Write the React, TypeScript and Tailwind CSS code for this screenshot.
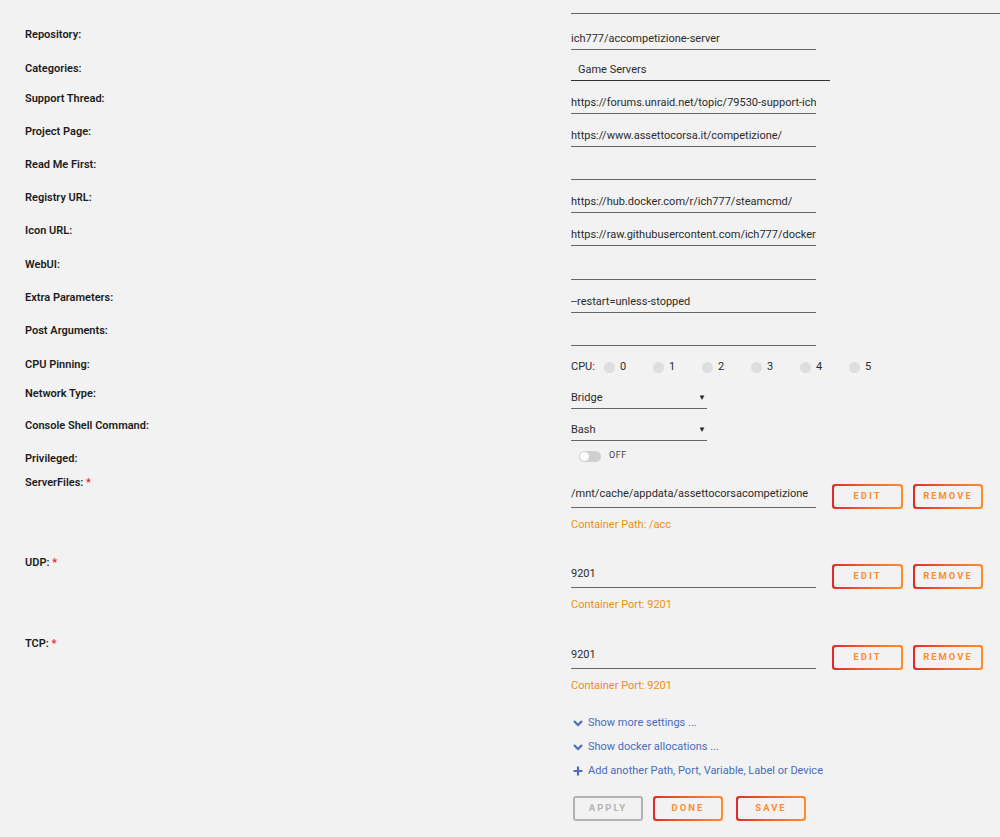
import React from "react";

const F = { fontFamily: 'Roboto, "Open Sans", sans-serif' };

function Label({ text, req }: { text: string; req?: boolean }) {
  return (
    <div className="w-[546px] shrink-0 pt-[1px] text-[11px] leading-[18px] font-semibold text-[#1c1c1c]">
      {text}
      {req && <span className="text-[#e22828]"> *</span>}
    </div>
  );
}

function TextInput({ value, w = "w-[245px]" }: { value?: string; w?: string }) {
  return (
    <div className={`${w} mt-[4px] h-[21px] pt-[1px] border-b border-[#666] text-[11px] leading-[18px] text-[#2b2b2b] overflow-hidden whitespace-nowrap`}>
      {value ?? ""}
    </div>
  );
}

function Row({ h, label, req, children }: { h: string; label: string; req?: boolean; children?: React.ReactNode }) {
  return (
    <div className={`flex ${h}`}>
      <Label text={label} req={req} />
      <div className="flex flex-col">{children}</div>
    </div>
  );
}

function GradBtn({ text, w = "w-[71px]" }: { text: string; w?: string }) {
  return (
    <div className={`${w} h-[25px] rounded-[3px] p-[2px] bg-linear-to-r from-[#e22828] to-[#ff8c2f]`}>
      <div className="w-full h-full rounded-[2px] bg-[#f2f2f2] flex items-center justify-center text-[9.5px] font-bold tracking-[2px] text-[#ff8c2f]">
        {text}
      </div>
    </div>
  );
}

function Chevron() {
  return (
    <svg width="10" height="8" viewBox="0 0 10 8" className="mr-[5px]">
      <path d="M1 2 L5 6 L9 2" fill="none" stroke="#486dba" strokeWidth="2.2" />
    </svg>
  );
}

function Plus() {
  return (
    <svg width="10" height="10" viewBox="0 0 10 10" className="mr-[5px]">
      <path d="M5 0.5 V9.5 M0.5 5 H9.5" fill="none" stroke="#486dba" strokeWidth="2.2" />
    </svg>
  );
}

function PathRow({ h, label, value, note }: { h: string; label: string; value: string; note: string }) {
  return (
    <div className={`flex ${h}`}>
      <Label text={label} req />
      <div className="flex flex-col">
        <div className="flex items-end mt-[11px]">
          <div className="w-[245px] h-[24px] pt-[1px] border-b border-[#666] text-[11px] leading-[18px] text-[#2b2b2b] whitespace-nowrap overflow-hidden">
            {value}
          </div>
          <div className="ml-[16px] flex gap-[10px] mb-[-1px]">
            <GradBtn text="EDIT" />
            <GradBtn text="REMOVE" w="w-[70px]" />
          </div>
        </div>
        <div className="mt-[8px] text-[11px] leading-[18px] text-[#f0900a]">{note}</div>
      </div>
    </div>
  );
}

export default function App() {
  const cpus = [0, 1, 2, 3, 4, 5];
  return (
    <div className="w-[1000px] h-[837px] bg-[#f2f2f2] overflow-hidden" style={F}>
      <div className="flex h-[25px]">
        <div className="w-[571px] shrink-0" />
        <div className="flex-1 h-[14px] border-b border-[#666]" />
      </div>
      <div className="pl-[25px]">
        <Row h="h-[34px]" label="Repository:">
          <TextInput value="ich777/accompetizione-server" />
        </Row>
        <Row h="h-[30px]" label="Categories:">
          <div className="w-[259px] mt-[1px] h-[21px] pt-[1px] border-b border-[#333] text-[11px] leading-[18px] text-[#2b2b2b] pl-[7px]">
            Game Servers
          </div>
        </Row>
        <Row h="h-[33px]" label="Support Thread:">
          <TextInput value="https://forums.unraid.net/topic/79530-support-ich777-gameserver-dockers/" />
        </Row>
        <Row h="h-[33px]" label="Project Page:">
          <TextInput value="https://www.assettocorsa.it/competizione/" />
        </Row>
        <Row h="h-[33px]" label="Read Me First:">
          <TextInput value="" />
        </Row>
        <Row h="h-[33px]" label="Registry URL:">
          <TextInput value="https://hub.docker.com/r/ich777/steamcmd/" />
        </Row>
        <Row h="h-[34px]" label="Icon URL:">
          <TextInput value="https://raw.githubusercontent.com/ich777/docker-templates/master/ich777/images/acc.png" />
        </Row>
        <Row h="h-[33px]" label="WebUI:">
          <TextInput value="" />
        </Row>
        <Row h="h-[33px]" label="Extra Parameters:">
          <TextInput value="--restart=unless-stopped" />
        </Row>
        <Row h="h-[34px]" label="Post Arguments:">
          <TextInput value="" />
        </Row>
        <Row h="h-[29px]" label="CPU Pinning:">
          <div className="flex items-center mt-[3px] h-[18px] text-[11px] text-[#2b2b2b]">
            <span className="mr-[9px]">CPU:</span>
            {cpus.map((c) => (
              <div key={c} className="flex items-center w-[49px]">
                <span className="w-[11px] h-[11px] rounded-full bg-[#dedede] mr-[5px]" />
                <span>{c}</span>
              </div>
            ))}
          </div>
        </Row>
        <Row h="h-[32px]" label="Network Type:">
          <div className="w-[136px] mt-[4px] h-[21px] pt-[1px] border-b border-[#666] text-[11px] leading-[18px] text-[#2b2b2b] flex justify-between pr-[1px]">
            <span>Bridge</span>
            <span className="text-[8px]">▼</span>
          </div>
        </Row>
        <Row h="h-[33px]" label="Console Shell Command:">
          <div className="w-[136px] mt-[4px] h-[21px] pt-[1px] border-b border-[#666] text-[11px] leading-[18px] text-[#2b2b2b] flex justify-between pr-[1px]">
            <span>Bash</span>
            <span className="text-[8px]">▼</span>
          </div>
        </Row>
        <Row h="h-[24px]" label="Privileged:">
          <div className="flex items-center ml-[8px] mt-[2px] h-[10px]">
            <div className="w-[22px] h-[11px] rounded-full bg-[#cfcfcf] relative">
              <div className="absolute left-[1px] top-[1px] w-[9px] h-[9px] rounded-full bg-white" />
            </div>
            <span className="ml-[8px] text-[9px] tracking-[0.5px] text-[#444]">OFF</span>
          </div>
        </Row>
        <PathRow h="h-[80px]" label="ServerFiles:" value="/mnt/cache/appdata/assettocorsacompetizione" note="Container Path: /acc" />
        <PathRow h="h-[81px]" label="UDP:" value="9201" note="Container Port: 9201" />
        <PathRow h="h-[76px]" label="TCP:" value="9201" note="Container Port: 9201" />
        <div className="ml-[548px] flex flex-col text-[11px] text-[#486dba]">
          <div className="flex items-center h-[24px] pt-[2px]">
            <Chevron />
            Show more settings ...
          </div>
          <div className="flex items-center h-[24px] pt-[2px]">
            <Chevron />
            Show docker allocations ...
          </div>
          <div className="flex items-center h-[24px] pt-[2px]">
            <Plus />
            Add another Path, Port, Variable, Label or Device
          </div>
          <div className="flex mt-[14px]">
            <div className="w-[70px] h-[25px] rounded-[3px] border-2 border-[#b3b3b3] flex items-center justify-center text-[9.5px] font-bold tracking-[2px] text-[#b3b3b3]">
              APPLY
            </div>
            <div className="ml-[10px]">
              <GradBtn text="DONE" w="w-[70px]" />
            </div>
            <div className="ml-[13px]">
              <GradBtn text="SAVE" w="w-[70px]" />
            </div>
          </div>
        </div>
      </div>
    </div>
  );
}
